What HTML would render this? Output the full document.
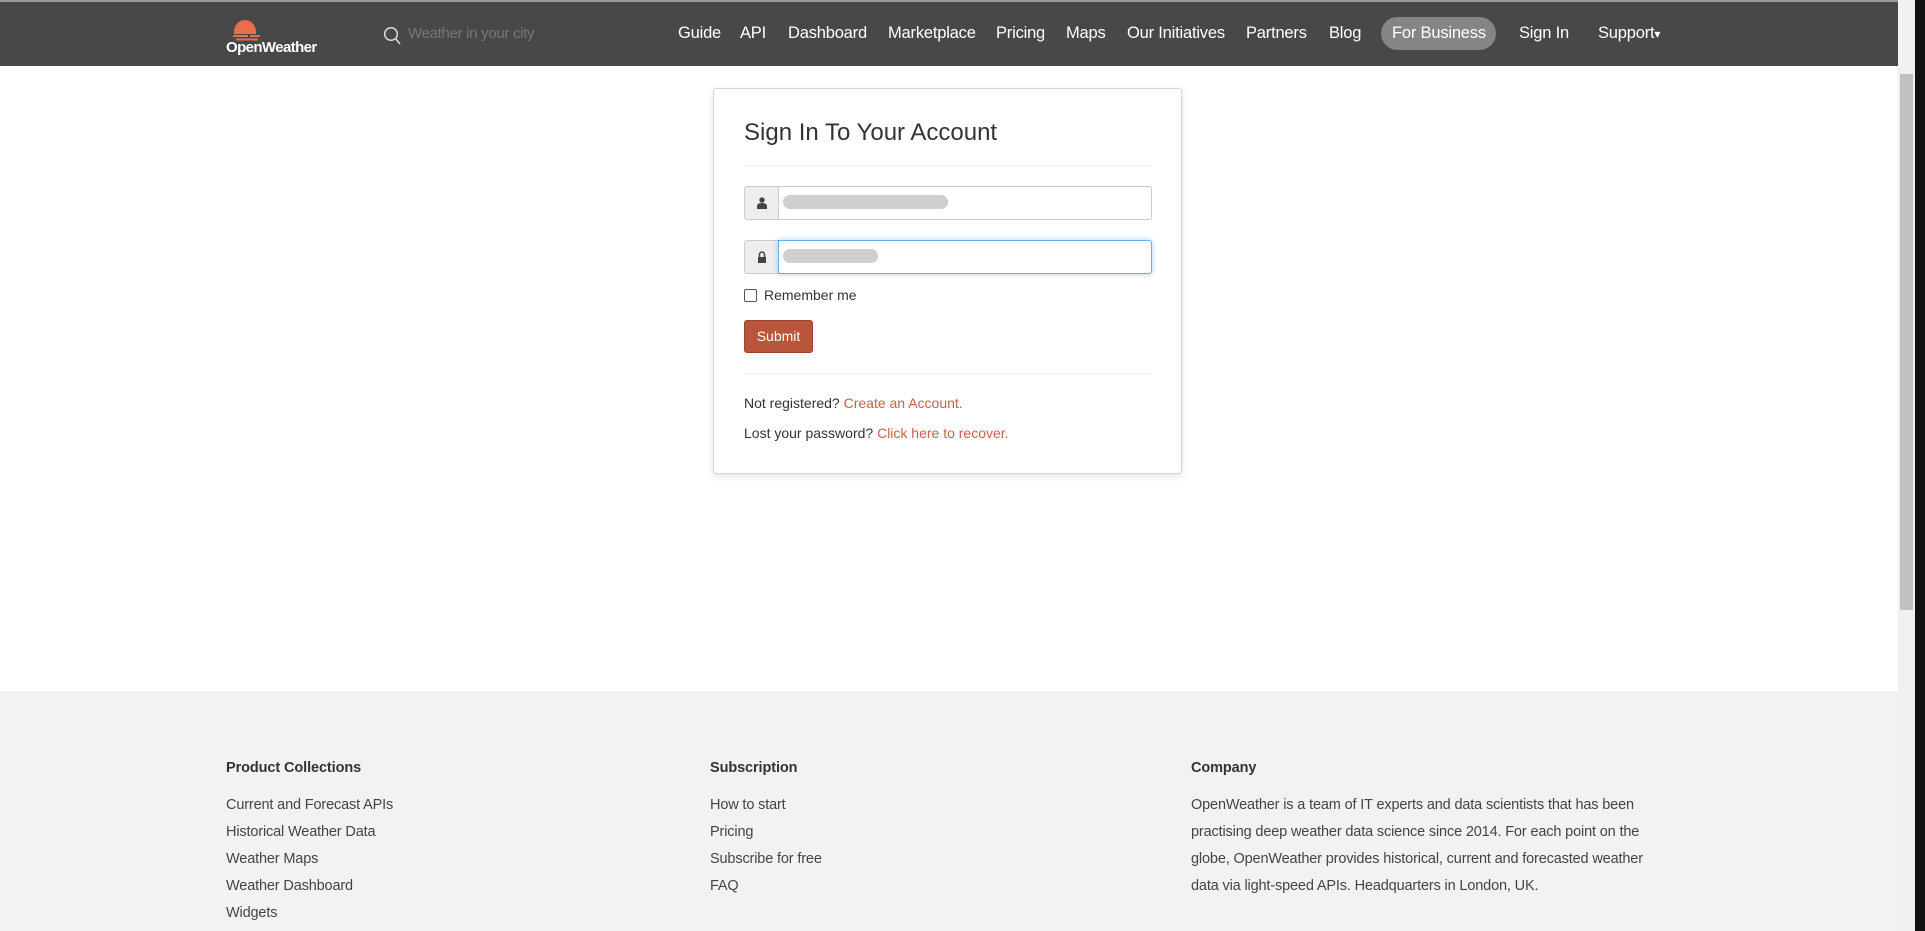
<!DOCTYPE html>
<html><head><meta charset="utf-8"><style>
*{margin:0;padding:0;box-sizing:border-box}
body{width:1925px;height:931px;overflow:hidden;background:#fff;font-family:"Liberation Sans",Arial,sans-serif;position:relative}
.abs{position:absolute}
#nav{left:0;top:0;width:1898px;height:66px;background:#484848;border-top:2px solid #9a9a9a}
.ni{position:absolute;top:22px;color:#fff;font-size:16.5px;white-space:nowrap;letter-spacing:-.2px}
#sb{left:1898px;top:0;width:17px;height:931px;background:#f1f1f1}
#thumb{left:1900px;top:74px;width:13px;height:536px;background:#c1c1c1}
#blk{left:1915px;top:0;width:10px;height:931px;background:#111}
#card{left:713px;top:88px;width:469px;height:386px;border:1px solid #d6d6d6;border-radius:3px;box-shadow:0 2px 8px rgba(0,0,0,.12);background:#fff}
.hr{position:absolute;left:30px;width:408px;height:1px;background:#eee}
.grp{position:absolute;left:30px;width:408px;height:34px}
.add{position:absolute;left:0;top:0;width:35px;height:34px;background:#eee;border:1px solid #ccc;border-radius:3px 0 0 3px}
.inp{position:absolute;left:34px;top:0;right:0;height:34px;border:1px solid #ccc;border-radius:0 3px 3px 0;background:#fff}
.blur{position:absolute;height:14px;background:#cfcfcf;border-radius:8px}
.t{position:absolute;font-size:15px;color:#333;white-space:nowrap}
.a{color:#c0644b}
#foot{left:0;top:691px;width:1898px;height:240px;background:#f2f2f2}
.fh{position:absolute;font-size:14.5px;font-weight:bold;color:#333;letter-spacing:-.1px}
.fl{position:absolute;font-size:14.5px;color:#444;line-height:27px;letter-spacing:-.15px}
</style></head><body>
<div id="nav" class="abs">
 <svg class="abs" style="left:230px;top:12px" width="32" height="28" viewBox="0 0 32 28">
  <path d="M4 18 A11 12 0 0 1 26 18 Z" fill="#eb6e4b"/>
  <rect x="4" y="17" width="22" height="3" fill="#eb6e4b"/>
  <rect x="3" y="21" width="15" height="2" fill="#eb6e4b"/><rect x="20" y="21" width="10" height="2" fill="#eb6e4b"/>
  <rect x="6" y="24.5" width="22" height="2" fill="#eb6e4b"/>
 </svg>
 <div class="abs" style="left:226px;top:37px;color:#fff;font-weight:bold;font-size:15px;letter-spacing:-.6px">OpenWeather</div>
 <svg class="abs" style="left:383px;top:24px" width="18" height="20" viewBox="0 0 18 20"><circle cx="8" cy="8" r="6.3" fill="none" stroke="#ddd" stroke-width="1.5"/><line x1="12.5" y1="12.5" x2="17" y2="18" stroke="#ddd" stroke-width="1.5"/></svg>
 <div class="abs" style="left:408px;top:23px;color:#777;font-size:15px;letter-spacing:-.3px">Weather in your city</div>
 <div class="ni" style="left:678px">Guide</div>
 <div class="ni" style="left:740px">API</div>
 <div class="ni" style="left:788px">Dashboard</div>
 <div class="ni" style="left:888px">Marketplace</div>
 <div class="ni" style="left:996px">Pricing</div>
 <div class="ni" style="left:1066px">Maps</div>
 <div class="ni" style="left:1127px">Our Initiatives</div>
 <div class="ni" style="left:1246px">Partners</div>
 <div class="ni" style="left:1329px">Blog</div>
 <div class="abs" style="left:1381px;top:15px;width:115px;height:33px;border-radius:17px;background:#858585"></div>
 <div class="ni" style="left:1392px">For Business</div>
 <div class="ni" style="left:1519px">Sign In</div>
 <div class="ni" style="left:1598px">Support<span style="font-size:12px">▾</span></div>
</div>
<div id="card" class="abs">
 <div class="t" style="left:30px;top:30px;font-size:24px;color:#333">Sign In To Your Account</div>
 <div class="hr" style="top:76px"></div>
 <div class="grp" style="top:97px"><div class="add"><svg style="position:absolute;left:12px;top:10px" width="10" height="12" viewBox="0 0 10 12"><circle cx="5" cy="3" r="2.7" fill="#444"/><path d="M0 12 V9 Q0 6 5 6 Q10 6 10 9 V12Z" fill="#444"/></svg></div><div class="inp"><div class="blur" style="left:4px;top:8px;width:165px"></div></div></div>
 <div class="grp" style="top:151px"><div class="add"><svg style="position:absolute;left:12px;top:10px" width="10" height="12" viewBox="0 0 10 12"><path d="M2.5 6 V3.5 A2.5 2.5 0 0 1 7.5 3.5 V6" fill="none" stroke="#444" stroke-width="1.5"/><rect x="1" y="6" width="8" height="6" fill="#444"/></svg></div><div class="inp" style="border-color:#66afe9;box-shadow:0 0 6px rgba(102,175,233,.6)"><div class="blur" style="left:4px;top:8px;width:95px"></div></div></div>
 <div class="abs" style="left:30px;top:200px;width:13px;height:13px;border:1px solid #555;border-radius:2px"></div>
 <div class="t" style="left:50px;top:198px;font-size:14px">Remember me</div>
 <div class="abs" style="left:30px;top:231px;width:69px;height:33px;background:#b8553b;border:1px solid #9c4330;border-radius:3px;color:#fff;font-size:14px;text-align:center;line-height:31px">Submit</div>
 <div class="hr" style="top:284px"></div>
 <div class="t" style="left:30px;top:306px;font-size:14px">Not registered? <span class="a">Create an Account.</span></div>
 <div class="t" style="left:30px;top:336px;font-size:14px">Lost your password? <span class="a">Click here to recover.</span></div>
</div>
<div id="foot" class="abs">
 <div class="fh" style="left:226px;top:69px">Product Collections</div>
 <div class="fl" style="left:226px;top:101px">Current and Forecast APIs<br>Historical Weather Data<br>Weather Maps<br>Weather Dashboard<br>Widgets</div>
 <div class="fh" style="left:710px;top:69px">Subscription</div>
 <div class="fl" style="left:710px;top:101px">How to start<br>Pricing<br>Subscribe for free<br>FAQ</div>
 <div class="fh" style="left:1191px;top:69px">Company</div>
 <div class="fl" style="left:1191px;top:101px;white-space:nowrap">OpenWeather is a team of IT experts and data scientists that has been<br>practising deep weather data science since 2014. For each point on the<br>globe, OpenWeather provides historical, current and forecasted weather<br>data via light-speed APIs. Headquarters in London, UK.</div>
</div>
<div id="sb" class="abs"></div><div id="thumb" class="abs"></div><div id="blk" class="abs"></div>
</body></html>
